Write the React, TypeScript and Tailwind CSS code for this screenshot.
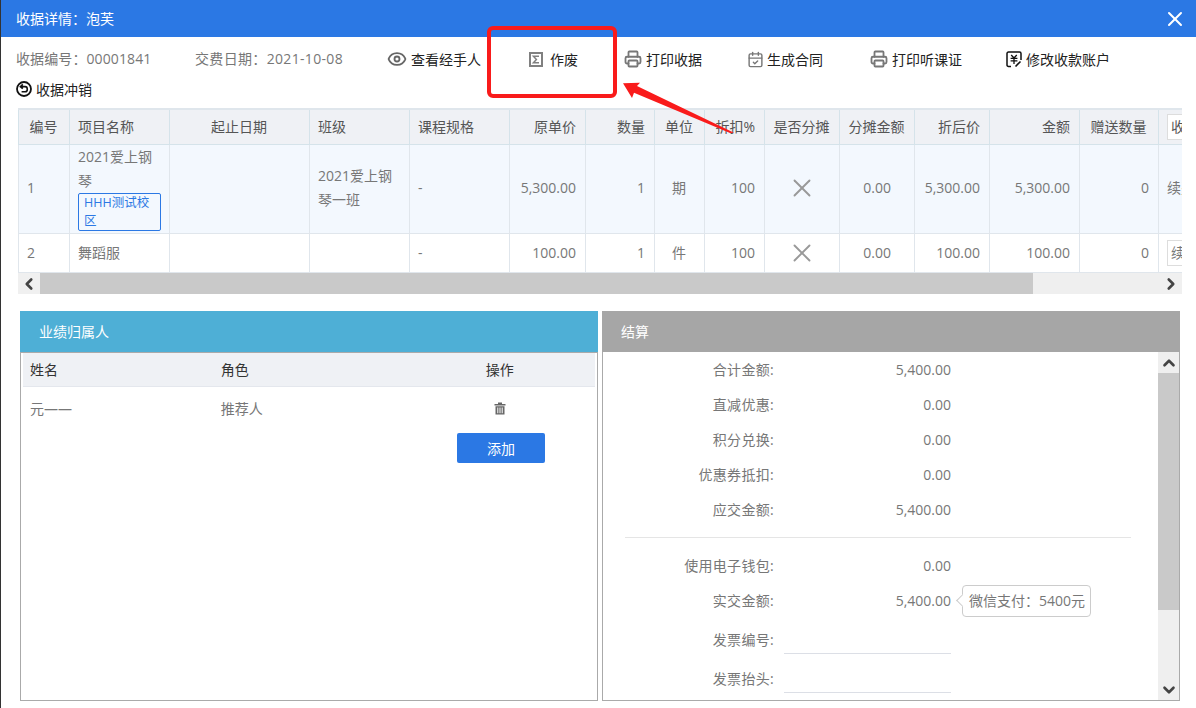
import { CalendarCheck, Eye, Printer, X, ChevronLeft, ChevronRight, ChevronUp, ChevronDown } from 'lucide-react';

const colWidths = [51, 100, 140, 100, 100, 76, 69, 50, 60, 75, 75, 75, 90, 79, 60];

const heads: [string, string][] = [
  ['编号', 'text-center'],
  ['项目名称', 'text-left'],
  ['起止日期', 'text-center'],
  ['班级', 'text-left'],
  ['课程规格', 'text-left'],
  ['原单价', 'text-right'],
  ['数量', 'text-right'],
  ['单位', 'text-center'],
  ['折扣%', 'text-right'],
  ['是否分摊', 'text-center'],
  ['分摊金额', 'text-center'],
  ['折后价', 'text-right'],
  ['金额', 'text-right'],
  ['赠送数量', 'text-center'],
];

const td = 'border border-[#e0e6ec] pl-[8px] align-middle';
const num = `${td} pr-[9px] text-right`;
const mid = `${td} pr-[9px] text-center`;

function SigmaIcon() {
  return (
    <svg width="14" height="15" viewBox="0 0 14 15" className="shrink-0 text-[#808080]" fill="none" stroke="currentColor">
      <rect x="1" y="1" width="12" height="13" strokeWidth="2" />
      <path d="M10 4.2H4.4L7.4 7.5L4.4 10.8H10" strokeWidth="1.5" />
    </svg>
  );
}

function UndoIcon() {
  return (
    <svg width="16" height="16" viewBox="0 0 16 16" className="shrink-0" fill="none" stroke="#111">
      <circle cx="8" cy="8" r="7" strokeWidth="1.8" />
      <path d="M6.8 3.4L4.4 5.6L6.8 7.6M4.8 5.6H9.2C12 5.6 12 10.8 9.2 10.8H5.6" strokeWidth="1.6" />
    </svg>
  );
}

function AccountIcon() {
  return (
    <svg width="16" height="17" viewBox="0 0 16 17" className="shrink-0" fill="none" stroke="#111">
      <path d="M5 15.5H2.5C1.6 15.5 1 14.9 1 14V2.5C1 1.6 1.6 1 2.5 1H13.5C14.4 1 15 1.6 15 2.5V9" strokeWidth="1.5" />
      <path d="M5.2 4L8 7L10.8 4M4.6 7.4H11.4M4.6 9.8H11.4M8 7V13" strokeWidth="1.3" />
      <path d="M9.5 15.5L14.5 10.5" strokeWidth="1.6" />
    </svg>
  );
}

function TrashIcon() {
  return (
    <svg width="12" height="13" viewBox="0 0 12 13" fill="#666">
      <path d="M4 0.5H8V2H11.5V3.4H0.5V2H4Z" />
      <path d="M1.5 4.2H10.5V12.5H1.5ZM3.3 5.4V11.3H4.3V5.4ZM5.5 5.4V11.3H6.5V5.4ZM7.7 5.4V11.3H8.7V5.4Z" fillRule="evenodd" />
    </svg>
  );
}

function Tool({ icon, label, className }: { icon: React.ReactNode; label: string; className: string }) {
  return (
    <button className={`flex items-center text-[#222] ${className}`}>
      {icon}
      <span>{label}</span>
    </button>
  );
}

function SettleRow({ label, value, children }: { label: string; value: string; children?: React.ReactNode }) {
  return (
    <div className="flex items-center h-[35px]">
      <span className="w-[171px] text-right tracking-[0.3px]">{label}</span>
      <span className="w-[177px] text-right">{value}</span>
      {children}
    </div>
  );
}

function InputRow({ label, className }: { label: string; className: string }) {
  return (
    <div className={`flex items-center h-[39px] ${className}`}>
      <span className="w-[171px] text-right tracking-[0.3px]">{label}</span>
      <div className="ml-[10px] w-[167px] h-[28px] border-b border-[#dcdfe6]" />
    </div>
  );
}

export default function App() {
  return (
    <div className="relative w-[1196px] h-[708px] overflow-hidden bg-white border-l border-[#333] text-[14px] text-[#777] font-['Open_Sans','Noto_Sans_CJK_SC',sans-serif]">
      {/* Title bar */}
      <div className="h-[37px] bg-[#2b78e4] flex items-center justify-between pl-[15px] pr-[9px] text-white">
        <span>收据详情：泡芙</span>
        <X className="w-[24px] h-[24px]" strokeWidth={2} />
      </div>

      {/* Info + actions */}
      <div className="flex flex-wrap items-center h-[71px] pl-[15px] content-start pt-[7px]">
        <span className="h-[30px] leading-[30px] w-[179px] tracking-[0.1px]">收据编号：00001841</span>
        <span className="h-[30px] leading-[30px] w-[192px] tracking-[0.33px]">交费日期：2021-10-08</span>
        <Tool className="w-[142px] h-[30px] gap-[4px]" icon={<Eye className="w-[20px] h-[20px] text-[#666]" strokeWidth={2.2} />} label="查看经手人" />
        <Tool className="w-[95px] h-[30px] gap-[7px]" icon={<SigmaIcon />} label="作废" />
        <Tool className="w-[123px] h-[30px] gap-[4px]" icon={<Printer className="w-[18px] h-[18px] text-[#777]" strokeWidth={2.4} />} label="打印收据" />
        <Tool className="w-[123px] h-[30px] gap-[3px]" icon={<CalendarCheck className="w-[17px] h-[17px] text-[#777]" strokeWidth={2} />} label="生成合同" />
        <Tool className="w-[136px] h-[30px] gap-[4px]" icon={<Printer className="w-[18px] h-[18px] text-[#777]" strokeWidth={2.4} />} label="打印听课证" />
        <Tool className="h-[30px] gap-[4px]" icon={<AccountIcon />} label="修改收款账户" />
        <Tool className="h-[30px] gap-[4px] w-[200px]" icon={<UndoIcon />} label="收据冲销" />
      </div>

      {/* Items table */}
      <div className="ml-[17px] w-[1164px] h-[186px] border-t-2 border-[#dfe6ec] bg-[#f0f0f0] overflow-hidden">
        <table className="table-fixed border-collapse w-[1200px] text-[14px]">
          <colgroup>
            {colWidths.map((w, i) => (
              <col key={i} style={{ width: w }} />
            ))}
          </colgroup>
          <thead>
            <tr className="h-[34px] bg-[#eff1f5] text-[#555]">
              {heads.map(([h, align]) => (
                <th key={h} className={`border border-[#d5e3ea] border-t-0 pl-[8px] pr-[9px] font-normal whitespace-nowrap ${align}`}>{h}</th>
              ))}
              <th className="border border-[#d5e3ea] border-t-0 pl-[8px] font-normal text-left">
                <div className="h-[26px] w-[50px] border border-[#ddd] bg-white pl-[3px] leading-[24px] whitespace-nowrap overflow-hidden text-[#555]">收费类型</div>
              </th>
            </tr>
          </thead>
          <tbody>
            <tr className="h-[89px] bg-[#f3f8fe] [&>td]:pb-[2px]">
              <td className={td}>1</td>
              <td className={`${td} pr-[8px]`}>
                <div className="leading-[24px]">2021爱上钢琴</div>
                <div className="border border-[#2b78e4] rounded-[2px] px-[5px] text-[12.5px] leading-[18px] text-[#2b78e4]">HHH测试校区</div>
              </td>
              <td className={td} />
              <td className={`${td} pr-[8px] leading-[24px]`}>2021爱上钢琴一班</td>
              <td className={td}>-</td>
              <td className={num}>5,300.00</td>
              <td className={num}>1</td>
              <td className={mid}>期</td>
              <td className={num}>100</td>
              <td className={mid}><X className="w-[30px] h-[30px] mx-auto text-[#999]" strokeWidth={1.5} /></td>
              <td className={`${td} pr-[23px] text-right`}>0.00</td>
              <td className={num}>5,300.00</td>
              <td className={num}>5,300.00</td>
              <td className={num}>0</td>
              <td className={`${td} whitespace-nowrap`}>续费</td>
            </tr>
            <tr className="h-[39px] bg-white">
              <td className={td}>2</td>
              <td className={td}>舞蹈服</td>
              <td className={td} />
              <td className={td} />
              <td className={td}>-</td>
              <td className={num}>100.00</td>
              <td className={num}>1</td>
              <td className={mid}>件</td>
              <td className={num}>100</td>
              <td className={mid}><X className="w-[30px] h-[30px] mx-auto text-[#999]" strokeWidth={1.5} /></td>
              <td className={`${td} pr-[23px] text-right`}>0.00</td>
              <td className={num}>100.00</td>
              <td className={num}>100.00</td>
              <td className={num}>0</td>
              <td className={td}>
                <div className="h-[26px] w-[50px] border border-[#ddd] pl-[3px] leading-[24px] whitespace-nowrap overflow-hidden">续费</div>
              </td>
            </tr>
          </tbody>
        </table>
        <div className="flex h-[22px] w-full">
          <div className="w-[22px] flex items-center justify-center"><ChevronLeft className="w-[18px] h-[18px] text-[#444]" strokeWidth={3.5} /></div>
          <div className="w-[993px] bg-[#c9c9c9]" />
          <div className="flex-1 bg-[#efefef]" />
          <div className="w-[22px] flex items-center justify-center"><ChevronRight className="w-[18px] h-[18px] text-[#444]" strokeWidth={3.5} /></div>
        </div>
      </div>

      {/* Bottom panels */}
      <div className="flex gap-[4px] ml-[19px] mt-[17px]">
        <div className="w-[578px] h-[390px] flex flex-col">
          <div className="h-[41px] bg-[#4eafd6] text-white pl-[19px] flex items-center">业绩归属人</div>
          <div className="flex-1 border border-[#aaa] px-[2px]">
            <div className="grid grid-cols-3 h-[34px] bg-[#eff1f5] border-b border-[#e4e7ed] items-center text-[#333]">
              <span className="pl-[7px]">姓名</span>
              <span className="pl-[7px]">角色</span>
              <span className="text-center">操作</span>
            </div>
            <div className="grid grid-cols-3 h-[43px] items-center">
              <span className="pl-[7px]">元——</span>
              <span className="pl-[7px]">推荐人</span>
              <span className="flex justify-center"><TrashIcon /></span>
            </div>
            <div className="flex justify-end pr-[50px] pt-[3px]">
              <button className="w-[88px] h-[30px] bg-[#2b78e4] text-white rounded-[2px]">添加</button>
            </div>
          </div>
        </div>

        <div className="w-[578px] h-[390px] flex flex-col">
          <div className="h-[41px] bg-[#a6a6a6] text-white pl-[19px] flex items-center">结算</div>
          <div className="flex-1 border border-[#aaa] border-t-0 flex overflow-hidden">
            <div className="flex-1">
              <SettleRow label="合计金额:" value="5,400.00" />
              <SettleRow label="直减优惠:" value="0.00" />
              <SettleRow label="积分兑换:" value="0.00" />
              <SettleRow label="优惠券抵扣:" value="0.00" />
              <SettleRow label="应交金额:" value="5,400.00" />
              <div className="ml-[22px] w-[506px] border-t border-[#e5e5e5] mt-[10px] mb-[10px]" />
              <SettleRow label="使用电子钱包:" value="0.00" />
              <SettleRow label="实交金额:" value="5,400.00">
                <div className="relative ml-[11px] h-[32px] w-[129px] border border-[#ccc] rounded-[4px] flex items-center pl-[6px] whitespace-nowrap bg-white">
                  <span className="absolute -left-[5px] top-[10px] w-[9px] h-[9px] rotate-45 bg-white border-l border-b border-[#ccc]" />
                  <span className="relative">微信支付：5400元</span>
                </div>
              </SettleRow>
              <InputRow label="发票编号:" className="mt-[2px]" />
              <InputRow label="发票抬头:" className="" />
            </div>
            <div className="w-[21px] bg-[#efefef] flex flex-col">
              <div className="h-[21px] flex items-center justify-center"><ChevronUp className="w-[18px] h-[18px] text-[#444]" strokeWidth={3.5} /></div>
              <div className="h-[237px] bg-[#c9c9c9]" />
              <div className="flex-1" />
              <div className="h-[21px] flex items-center justify-center"><ChevronDown className="w-[18px] h-[18px] text-[#444]" strokeWidth={3.5} /></div>
            </div>
          </div>
        </div>
      </div>

      {/* Annotation drawn over the screenshot */}
      <div className="absolute left-[486px] top-[26px] w-[130px] h-[72px] border-[4px] border-[#f91b1b] rounded-[6px]" />
      <svg className="absolute left-[609px] top-[70px]" width="130" height="70" viewBox="0 0 130 70">
        <path d="M13 13.3L30 12.7L27 16L124 62.7L120 63L24 22.7L22 28Z" fill="#f91b1b" />
      </svg>
    </div>
  );
}
